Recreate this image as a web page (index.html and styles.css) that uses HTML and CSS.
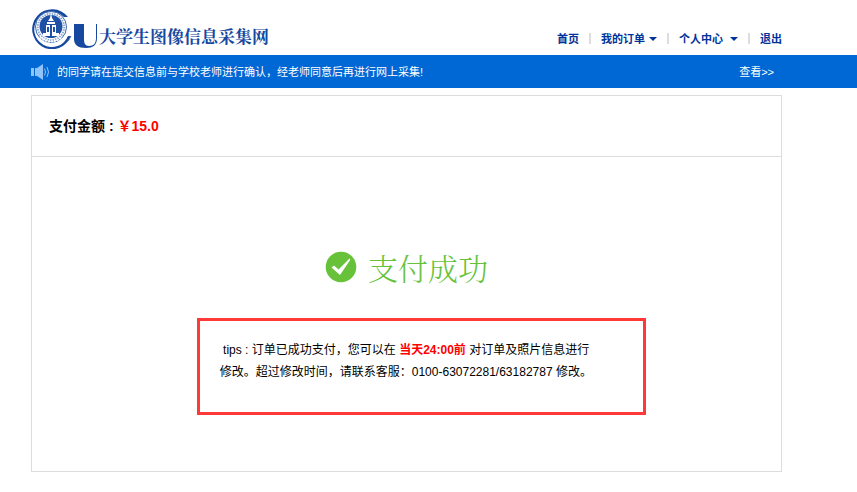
FILE: index.html
```html
<!DOCTYPE html>
<html lang="zh-CN">
<head>
<meta charset="utf-8">
<meta name="viewport" content="width=device-width, initial-scale=1">
<title>大学生图像信息采集网</title>
<link rel="stylesheet" href="styles.css">
</head>
<body>
<header class="header">
  <a class="brand" href="#">
    <svg class="brand-mark" viewBox="0 0 66 42" width="66" height="42" aria-hidden="true">
      <path d="M37 10A20 20 0 1 0 40 29L37 29A17.500 17.500 0 1 1 33 10Z" fill="#1648a0"/>
      <path d="M40 29a20 20 0 0 1-6 8" fill="none" stroke="#5379b9"/>
      <circle cx="20" cy="20" r="15.500" fill="#fff" stroke="#3c68b0"/>
      <circle cx="20" cy="20" r="13.200" fill="none" stroke="#8ea9d3" stroke-width="2" stroke-dasharray="1.500 1"/>
      <circle cx="20" cy="19.500" r="11.500" fill="#1e50a5"/>
      <path d="M20 6l1 5 2 3h-6l2-3zM16 15h8v2h-8zM15 18h4v10h-4zM21 18h4v10h-4zM12 26h16v3H12z" fill="#fff"/>
      <path d="M19 17h2v12h-2zM16 20h2v5h-2zM22 20h2v5h-2z" fill="#1e50a5"/>
      <path d="M9 30q11 9 22 0" fill="none" stroke="#fff" stroke-width="2" stroke-dasharray="2 1"/>
      <path d="M43 17h10v15c0 4 1 7 5 7 5 0 7-3 7-8V17h1v14c0 7-4 10-11 10-8 0-12-3-12-9z" fill="#1648a0"/>
    </svg>
    <span class="brand-name">大学生图像信息采集网</span>
  </a>
  <nav class="nav">
    <a href="#">首页</a>
    <span class="divider"></span>
    <a href="#" class="has-menu">我的订单</a>
    <span class="divider"></span>
    <a href="#" class="has-menu wide">个人中心</a>
    <span class="divider"></span>
    <a href="#">退出</a>
  </nav>
</header>
<div class="notice">
  <svg class="speaker" viewBox="0 0 20 16" width="20" height="16" aria-hidden="true">
    <path d="M0 4h3v8H0zM4 4h2l6-4v16l-6-4H4z" fill="#8fc3fb"/>
    <path d="M13.500 4.500q2 3.500 0 7M16 3q3 5 0 10" fill="none" stroke="#8fc3fb"/>
  </svg>
  <span class="notice-text">的同学请在提交信息前与学校老师进行确认，经老师同意后再进行网上采集!</span>
  <a class="more" href="#">查看&gt;&gt;</a>
</div>
<main class="card">
  <div class="amount">支付金额 : <span class="price">￥15.0</span></div>
  <section class="result">
    <h1 class="status">
      <svg viewBox="0 0 32 32" width="32" height="32" aria-hidden="true">
        <circle cx="16" cy="16" r="15.300" fill="#67c23a"/>
        <path d="M6.500 16.500l2.500-2 4.500 4L24.500 7.500l.8 1.200L15 24z" fill="#fff"/>
      </svg>
      <span>支付成功</span>
    </h1>
    <p class="tips">&nbsp;tips : 订单已成功支付，您可以在 <strong>当天24:00前</strong> 对订单及照片信息进行<br>修改。超过修改时间，请联系客服：0100-63072281/63182787 修改。</p>
  </section>
</main>
</body>
</html>
```
FILE: styles.css
```css
* {
  box-sizing: border-box;
}

body {
  margin: 0;
  background: #fff;
  color: #000;
  font: 12px/22px "Liberation Sans", "Noto Sans CJK SC", sans-serif;
}

a {
  color: inherit;
  text-decoration: none;
}

.header,
.notice {
  display: flex;
  align-items: center;
  padding: 0 75px 0 31px;
}

.header {
  height: 55px;
  justify-content: space-between;
  color: #003399;
}

.brand {
  display: flex;
  align-items: center;
  gap: 2px;
  color: #1648a0;
}

.brand-name {
  padding-top: 16px;
  font: 700 17px/22px "Noto Serif CJK SC", "Noto Sans CJK SC", serif;
  white-space: nowrap;
}

.nav {
  display: flex;
  align-items: center;
  gap: 10px;
  padding-top: 22px;
  font-size: 11px;
  font-weight: bold;
  white-space: nowrap;
}

.divider {
  width: 2px;
  height: 11px;
  background: #ddd;
}

.has-menu {
  display: flex;
  align-items: center;
  gap: 4px;
}

.has-menu::after {
  content: "";
  border: 4px solid transparent;
  border-top: 4px solid #003399;
  border-bottom: 0;
}

.wide {
  gap: 7px;
}

.notice {
  height: 33px;
  background: #0068d4;
  color: #fff;
  font-size: 11px;
}

.notice-text {
  margin-left: 6px;
}

.more {
  margin-left: auto;
  padding-right: 8px;
}

.card {
  margin: 7px 75px 20px 31px;
  border: 1px solid #ddd;
}

.amount {
  padding: 19px 17px;
  border-bottom: 1px solid #ddd;
  font-size: 14px;
  font-weight: bold;
}

.price,
.tips strong {
  color: #f00;
}

.result {
  padding: 90px 0 56px;
}

.status {
  display: flex;
  align-items: center;
  justify-content: center;
  gap: 11px;
  margin: 0 0 31px;
  color: #67c23a;
  font: 300 30px/40px "Noto Serif CJK SC", "Noto Sans CJK SC", serif;
}

.tips {
  width: 60%;
  margin: 0 0 0 22%;
  padding: 18px 20px 29px;
  border: 3px solid #ff3838;
}
```
